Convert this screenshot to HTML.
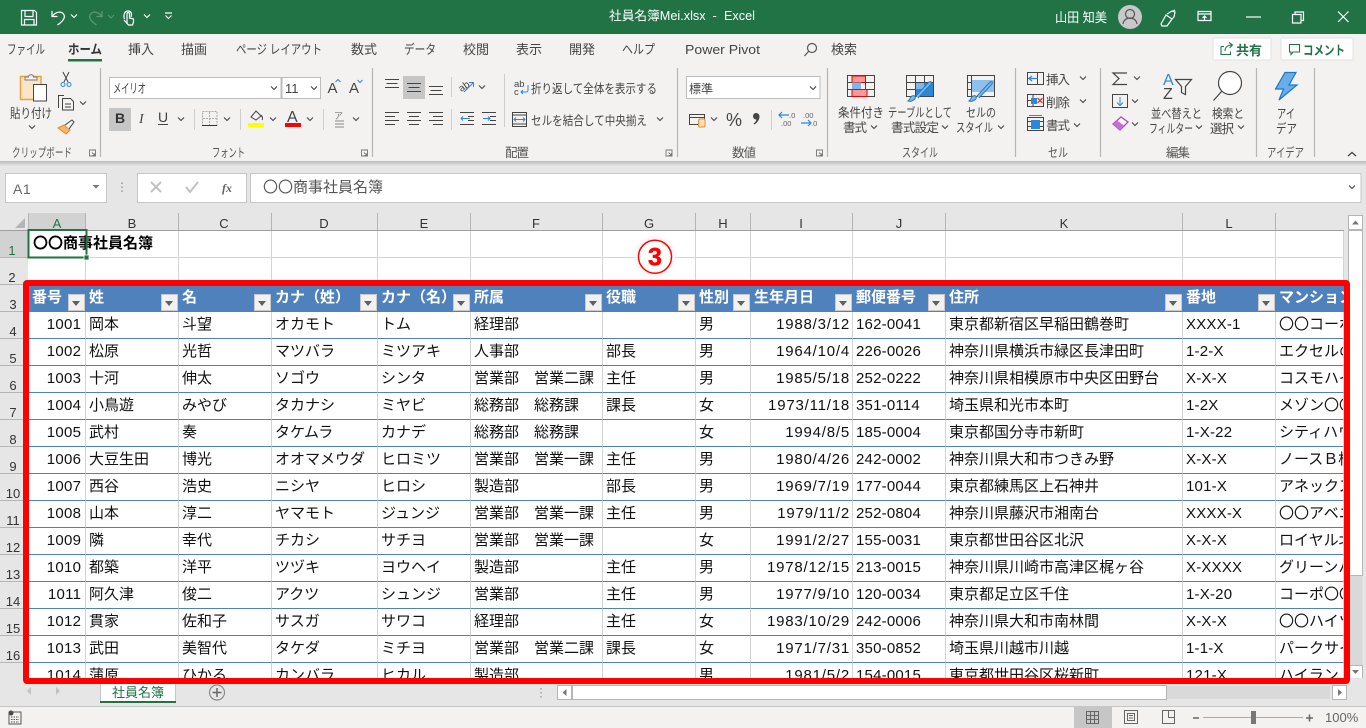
<!DOCTYPE html>
<html lang="ja"><head><meta charset="utf-8"><title>社員名簿Mei.xlsx - Excel</title>
<style>
html,body{margin:0;padding:0;width:1366px;height:728px;overflow:hidden;background:#e6e6e6}
body{position:relative;font-family:"Liberation Sans","Noto Sans CJK JP",sans-serif}
svg{position:absolute;left:0;top:0;font-family:"Liberation Sans","Noto Sans CJK JP",sans-serif}
#grid{position:absolute;left:28px;top:231px;width:1316px;height:447px;overflow:hidden;background:#fff}
table{border-collapse:separate;border-spacing:0;table-layout:fixed;width:1316px;font-size:15px;color:#111}
td{height:27px;box-sizing:border-box;border-right:1px solid #d4d4d4;border-bottom:1px solid #d4d4d4;padding:0 0 0 3px;white-space:nowrap;overflow:hidden;position:relative;line-height:26px}
tr.d td{border-bottom-color:#4f81bd}
tr.h td{background:#4f81bd;color:#fff;font-weight:bold;border-right:0;border-bottom-color:#4f81bd;line-height:20px;vertical-align:top;padding-top:3px}
td.r{text-align:right;padding:0 2px 0 0;letter-spacing:.8px}
td.n{text-align:right;padding:0 3.7px 0 0;letter-spacing:.3px}
td.z{letter-spacing:.2px}
i{position:absolute;right:1px;top:9px;width:15px;height:15px;border:1px solid #c9c9c9;background:#f1f1f1}
i:after{content:"";position:absolute;left:3px;top:6px;border:4px solid transparent;border-top:5px solid #5f5f5f;border-bottom:0}
#red{position:absolute;left:23.4px;top:280px;width:1326.6px;height:404px;box-sizing:border-box;border:6.7px solid #f00;border-radius:4px}
</style></head><body>
<svg width="1366" height="728" viewBox="0 0 1366 728">
<defs><path id="c" d="M-3-1.500 0 1.500 3-1.500" fill="none" stroke="#444" stroke-width="1.100"/>
<path id="w" d="M-3-1.500 0 1.500 3-1.500" fill="none" stroke="#fff" stroke-width="1.100"/>
<linearGradient id="sh" x1="0" y1="0" x2="0" y2="1"><stop offset="0" stop-color="#bbb"/><stop offset="1" stop-color="#e6e6e6"/></linearGradient>
<filter id="glow" x="-30%" y="-30%" width="160%" height="160%"><feGaussianBlur stdDeviation="1.500"/></filter></defs>
<!-- title -->
<rect width="1366" height="34" fill="#217346"/>
<g fill="none" stroke="#fff" stroke-width="1.200">
<path d="M21.500 10.500h13l2 2v12.500h-15zM25 10.500v6h8v-6M24.500 25v-5.500h9.500v5.500"/>
<path d="M52 11v5.500h5.500M52.500 16c3-4 8-5 10.500-2.500 3 3 1 7-5.500 11.500"/>
<path d="M124.500 19c-1-2-1-8 3.500-8 3.500 0 4 3 3 6M127 24v-10c0-2 2.500-2 2.500 0v4l4 1v3l-1 3h-4l-4.500-5" />
<path d="M165 13h7"/>
</g>
<path d="M102 11v5.500h-5.500M101.500 16c-3-4-8-5-10.500-2.500-3 3-1 7 5.500 11.500" fill="none" stroke="#5c9a77" stroke-width="1.200"/>
<use href="#w" x="74" y="16"/><use href="#w" x="147" y="16"/><use href="#w" x="168.500" y="17"/>
<path d="M108 15l3 3 3-3" fill="none" stroke="#5c9a77"/>
<text x="609" y="20" font-size="12.500" fill="#fff" textLength="146" lengthAdjust="spacingAndGlyphs" xml:space="preserve">社員名簿Mei.xlsx  -  Excel</text>
<text x="1055" y="22" font-size="13" fill="#fff" textLength="52" lengthAdjust="spacingAndGlyphs" xml:space="preserve">山田 知美</text>
<circle cx="1130" cy="17" r="12" fill="#c8c8c8"/>
<circle cx="1130" cy="14" r="4.500" fill="none" stroke="#555" stroke-width="1.200"/><path d="M1123 24c1-8 13-8 14 0" fill="none" stroke="#555" stroke-width="1.200"/>
<g fill="none" stroke="#fff" stroke-width="1.200">
<path d="M1161 24l5-9 6 4-5 7-5 0zM1167 14l5-3 3 1-1 5-2 2M1173 11l2-1"/>
<path d="M1198 11.500h13v9h-13zM1198 14h13M1204.500 20v-4M1202.500 18l2-2 2 2"/>
<path d="M1246 17h15"/>
<path d="M1292.500 14.500h8.500v8.500h-8.500zM1295 14.500v-2.500h8.500v8.500h-2.500"/>
<path d="M1338 11.500l10.500 10.500M1348.500 11.500l-10.500 10.500"/>
</g>
<!-- ribbon -->
<rect y="34" width="1366" height="127" fill="#f3f2f1"/>
<rect y="161" width="1366" height="5" fill="url(#sh)"/>
<g font-size="13" fill="#444">
<text x="7" y="54" textLength="38" lengthAdjust="spacingAndGlyphs">ファイル</text>
<text x="68" y="54" font-weight="bold" textLength="34" lengthAdjust="spacingAndGlyphs" style="fill:#333">ホーム</text>
<text x="128" y="54" textLength="26">挿入</text><text x="181" y="54" textLength="26">描画</text>
<text x="236" y="54" textLength="86" lengthAdjust="spacingAndGlyphs" xml:space="preserve">ページ レイアウト</text>
<text x="351" y="54" textLength="26">数式</text><text x="404" y="54" textLength="32" lengthAdjust="spacingAndGlyphs">データ</text>
<text x="463" y="54" textLength="26">校閲</text><text x="516" y="54" textLength="26">表示</text><text x="569" y="54" textLength="26">開発</text>
<text x="622" y="54" textLength="33" lengthAdjust="spacingAndGlyphs">ヘルプ</text>
<text x="685" y="54" textLength="75" lengthAdjust="spacingAndGlyphs">Power Pivot</text>
<text x="831" y="54" textLength="26">検索</text></g>
<rect x="68" y="59" width="34" height="2.500" fill="#217346"/>
<circle cx="812" cy="48" r="4.500" fill="none" stroke="#555" stroke-width="1.200"/><path d="M808.500 51.500l-4 4.500" stroke="#555" stroke-width="1.200"/>
<rect x="1213" y="38" width="58" height="22" rx="1" fill="#fff" stroke="#e3e2e0"/>
<rect x="1281" y="38" width="72" height="22" rx="1" fill="#fff" stroke="#e3e2e0"/>
<path d="M1221 46.500h3M1221 46.500v8h9.500v-3M1225 51c0-4 3-6 7-6M1229 42.500l3.500 2.500-3 3" fill="none" stroke="#217346" stroke-width="1.100"/>
<text x="1236" y="55" font-size="13" font-weight="bold" fill="#217346" textLength="26">共有</text>
<path d="M1289.500 44.500h10v7.500h-6.500l-2 2.500v-2.500h-1.500z" fill="none" stroke="#217346" stroke-width="1.100"/>
<text x="1303" y="55" font-size="13" font-weight="bold" fill="#217346" textLength="42" lengthAdjust="spacingAndGlyphs">コメント</text>
<!-- separators -->
<g stroke="#b8b6b4" stroke-width="1.200">
<path d="M100.500 68v89M372.500 68v89M677.500 68v89M827.500 68v89M1015.500 68v89M1100.500 68v89M1256.500 68v89M1314.500 68v89"/></g>
<g stroke="#cfcdcb"><path d="M194.500 109v21M240.500 109v21M323.500 109v21M451.500 77v20M451.500 109v21M504.500 74v53M771.500 110v20"/></g>
<!-- group labels -->
<g font-size="12.500" fill="#555">
<text x="12" y="157" textLength="60" lengthAdjust="spacingAndGlyphs">クリップボード</text>
<text x="212" y="157" textLength="33" lengthAdjust="spacingAndGlyphs">フォント</text>
<text x="505" y="157" textLength="24">配置</text><text x="732" y="157" textLength="24">数値</text>
<text x="902" y="157" textLength="36" lengthAdjust="spacingAndGlyphs">スタイル</text>
<text x="1048" y="157" textLength="20" lengthAdjust="spacingAndGlyphs">セル</text>
<text x="1166" y="157" textLength="24">編集</text>
<text x="1267" y="157" textLength="37" lengthAdjust="spacingAndGlyphs">アイデア</text></g>
<g fill="none" stroke="#777" stroke-width=".900"><path d="M89.500 150h6v6h-6zM92 152.500l3 3M95 153v2.500h-2.500M361.500 150h6v6h-6zM364 152.500l3 3M367 153v2.500h-2.500M666 150h6v6h-6zM668.500 152.500l3 3M671.500 153v2.500h-2.500M816.500 150h6v6h-6zM819 152.500l3 3M822 153v2.500h-2.500"/></g>
<!-- clipboard -->
<rect x="20.500" y="76.500" width="20.500" height="23" fill="#fbe5c8" stroke="#eda33c" stroke-width="1.500"/>
<path d="M25 80v-3h3.500c0-3 5-3 5 0H37v3z" fill="#f3f2f1" stroke="#777"/>
<rect x="33.500" y="84.500" width="13" height="16.500" fill="#fff" stroke="#444"/>
<text x="10" y="118" font-size="13" fill="#444" textLength="42" lengthAdjust="spacingAndGlyphs">貼り付け</text>
<use href="#c" x="32" y="127"/>
<path d="M63 72l5 10M69 72l-5 10" stroke="#444" fill="none"/><circle cx="63" cy="84.500" r="2" fill="none" stroke="#2b88d8"/><circle cx="69" cy="84.500" r="2" fill="none" stroke="#2b88d8"/>
<path d="M58.500 108V95.500h5.500M62.500 98.500h8l3 3v8.500h-11zM65 104h6M65 107h6" fill="none" stroke="#444"/><use href="#c" x="83" y="103"/>
<path d="M58 128l6-3 6 5-4 4z" fill="#f5b66e" stroke="#e8881f"/><path d="M65 125l7-5 2 2-5 7" fill="#f3f2f1" stroke="#444"/>
<!-- font -->
<rect x="109.500" y="77.500" width="171.500" height="21" fill="#fff" stroke="#bdbdbd"/><rect x="282" y="77.500" width="38.500" height="21" fill="#fff" stroke="#bdbdbd"/>
<text x="113" y="93" font-size="13" fill="#444" textLength="33" lengthAdjust="spacingAndGlyphs">メイリオ</text>
<text x="285" y="93" font-size="13" fill="#444">11</text><use href="#c" x="274" y="88"/><use href="#c" x="314" y="88"/>
<text x="327.500" y="93" font-size="15" fill="#444">A</text><path d="M335.500 82l2.500-2.500 2.500 2.500" fill="none" stroke="#2b88d8"/>
<text x="349" y="93" font-size="15" fill="#444">A</text><path d="M357.500 80l2.500 2.500 2.500-2.500" fill="none" stroke="#2b88d8"/>
<rect x="109" y="108" width="22" height="23" fill="#c6c6c6"/>
<text x="115" y="123" font-size="14" font-weight="bold" fill="#333">B</text>
<text x="139" y="123" font-size="14" font-style="italic" fill="#444" font-family="Liberation Serif">I</text>
<text x="158" y="122" font-size="14" fill="#444">U</text><path d="M158 124.500h10" stroke="#444"/><use href="#c" x="181" y="119"/>
<rect x="202.500" y="111.500" width="14.500" height="14" fill="none" stroke="#aaa" stroke-dasharray="2 1"/><path d="M209.500 112v13M203 118.500h14" stroke="#aaa" stroke-dasharray="2 1"/><path d="M202 125.500h15" stroke="#333"/><use href="#c" x="227" y="119"/>
<path d="M251 117l5-6 5 5-5 4zM261 115c1 1 2 3 1 5" fill="none" stroke="#444"/><rect x="248" y="123" width="16" height="4" fill="#ff0"/><use href="#c" x="273" y="119"/>
<text x="287" y="122" font-size="16" fill="#444">A</text><rect x="285" y="123" width="16" height="4" fill="#f00"/><use href="#c" x="310" y="119"/>
<text x="334" y="119" font-size="9" fill="#777">ア</text><path d="M335 121h9M335 124h9M335 127h9" stroke="#888"/><use href="#c" x="356" y="119"/>
<!-- alignment -->
<rect x="403" y="76" width="22" height="23" fill="#c6c6c6"/>
<g stroke="#444" fill="none"><path d="M385 79.500h14M386.500 83.500h11M385 87.500h14M407 83.500h14M408.500 87.500h11M407 91.500h14M429 86.500h14M430.500 90.500h11M429 94.500h14M385 112.500h14M385 116.500h10M385 120.500h14M385 124.500h10M407 112.500h14M409 116.500h10M407 120.500h14M409 124.500h10M429 112.500h14M433 116.500h10M429 120.500h14M433 124.500h10"/>
<path d="M460 112.500h14M468 116.500h6M468 120.500h6M460 124.500h14M482 112.500h14M490 116.500h6M490 120.500h6M482 124.500h14"/></g>
<path d="M470 118.500h-9M463 116.500l-2 2 2 2M483 118.500h7M488 116.500l2 2-2 2" fill="none" stroke="#2b88d8"/>
<text x="459" y="91" font-size="10" fill="#444" transform="rotate(-35 462 88)">ab</text><path d="M464 92l9-9M469 82.500h4.500v4.500" fill="none" stroke="#2b88d8"/><use href="#c" x="482" y="87"/>
<text x="514" y="87" font-size="9.500" fill="#444">ab</text><text x="514" y="95" font-size="9.500" fill="#444">c</text><path d="M528 85v5c0 2-1 2-2 2h-5M523 90l-2 2 2 2" fill="none" stroke="#2b88d8"/>
<text x="531" y="93" font-size="12.500" fill="#444" textLength="126" lengthAdjust="spacingAndGlyphs">折り返して全体を表示する</text>
<rect x="512.500" y="112.500" width="14" height="14" fill="none" stroke="#444"/><path d="M513 115h13M513 124h13" stroke="#444"/><path d="M514 119.500h11M516 117.500l-2 2 2 2M523 117.500l2 2-2 2" fill="none" stroke="#2b88d8"/>
<text x="531" y="125" font-size="12.500" fill="#444" textLength="116" lengthAdjust="spacingAndGlyphs">セルを結合して中央揃え</text><use href="#c" x="660" y="119"/>
<!-- number -->
<rect x="686.500" y="76.500" width="133.500" height="22" fill="#fff" stroke="#bdbdbd"/>
<text x="689" y="93" font-size="12" fill="#444" textLength="24">標準</text><use href="#c" x="813" y="88"/>
<path d="M689.500 114.500h15v10h-15zM689.500 117.500h15" fill="none" stroke="#444"/><rect x="698.500" y="119" width="6.500" height="8" rx="1.500" fill="#fbe0c0" stroke="#eb8a2c"/><use href="#c" x="714" y="119"/>
<text x="726" y="126" font-size="18" fill="#444">%</text>
<path d="M756 113c2 0 3.500 1.500 3.500 3.500 0 3-2 6-5 8l-1-1c1.500-1 2.500-2 3-4-2 0-3.500-1.500-3.500-3.300 0-1.800 1.500-3.200 3-3.200z" fill="#444"/>
<path d="M779 115h10M782 112l-3 3 3 3M801 123h10M808 120l3 3-3 3" fill="none" stroke="#2b88d8" stroke-width="1.200"/>
<g font-size="7.500" fill="#666"><text x="789" y="118">.0</text><text x="781" y="126">.00</text><text x="803" y="118">.00</text><text x="811" y="126">.0</text></g>
<!-- styles -->
<g fill="none" stroke="#444"><path d="M847.500 75.500h27v21h-27zM847.500 82.500h27M847.500 89.500h27M856.500 75.500v21M865.500 75.500v21"/></g>
<rect x="852" y="76" width="13.500" height="6.500" fill="#f99" stroke="#e00"/><rect x="852" y="82.500" width="9" height="7" fill="#7db8ea"/><rect x="852" y="89.500" width="15" height="7" fill="#f99" stroke="#e00"/>
<g fill="none" stroke="#444"><path d="M906.500 75.500h27v21h-27zM906.500 82.500h27M906.500 89.500h27M915.500 75.500v21M924.500 75.500v21"/></g>
<rect x="916" y="83" width="17" height="13" fill="#2b88d8"/><rect x="916" y="83" width="8" height="6" fill="#7db8ea"/>
<path d="M915 99c-3 2-4 3-7 2 2-1 2-4 4-5 2-1 4 0 3 3zM916 96l13-14c2-1 3 0 2 2l-13 14" fill="#7db8ea" stroke="#2b79c2"/>
<g fill="none" stroke="#444"><path d="M967.500 75.500h27v21h-27zM967.500 82.500h4M990.500 82.500h4M967.500 89.500h4M971.500 75.500v21"/></g>
<rect x="972" y="80" width="22" height="12" fill="#8dc0ee"/>
<path d="M976 99c-3 2-4 3-7 2 2-1 2-4 4-5 2-1 4 0 3 3zM977 96l13-14c2-1 3 0 2 2l-13 14" fill="#7db8ea" stroke="#2b79c2"/>
<g font-size="12.500" fill="#444">
<text x="838" y="117" textLength="46" lengthAdjust="spacingAndGlyphs">条件付き</text><text x="843" y="132" textLength="24">書式</text><use href="#c" x="874" y="127"/>
<text x="888" y="117" textLength="64" lengthAdjust="spacingAndGlyphs">テーブルとして</text><text x="891" y="132" textLength="48">書式設定</text><use href="#c" x="945" y="127"/>
<text x="966" y="117" textLength="30" lengthAdjust="spacingAndGlyphs">セルの</text><text x="956" y="132" textLength="37" lengthAdjust="spacingAndGlyphs">スタイル</text><use href="#c" x="1001" y="127"/>
<!-- cells -->
<text x="1046" y="84" textLength="24">挿入</text><use href="#c" x="1083" y="78"/>
<text x="1046" y="107" textLength="24">削除</text><use href="#c" x="1083" y="101"/>
<text x="1046" y="130" textLength="24">書式</text><use href="#c" x="1077" y="125"/>
<!-- editing -->
<text x="1151" y="118" textLength="51" lengthAdjust="spacingAndGlyphs">並べ替えと</text><text x="1149" y="133" textLength="44" lengthAdjust="spacingAndGlyphs">フィルター</text><use href="#c" x="1199" y="127"/>
<text x="1212" y="118" textLength="32" lengthAdjust="spacingAndGlyphs">検索と</text><text x="1210" y="133" textLength="24">選択</text><use href="#c" x="1241" y="127"/>
<text x="1277" y="118" textLength="18" lengthAdjust="spacingAndGlyphs">アイ</text><text x="1276" y="133" textLength="21" lengthAdjust="spacingAndGlyphs">デア</text></g>
<!-- cell icons -->
<g fill="none" stroke="#444"><path d="M1027.500 72.500h16v12h-16zM1037.500 72.500v12M1027.500 78.500h10M1027.500 94.500h16v12h-16zM1033 94.500v12M1027.500 100.500h5M1027.500 117.500h16v13h-16zM1027.500 121.500h16M1027.500 126.500h16"/></g>
<path d="M1038 78.500h-9M1032 76l-3 2.500 3 2.500" fill="none" stroke="#2b88d8" stroke-width="1.300"/><rect x="1031" y="98" width="6" height="6" fill="#2b88d8"/><path d="M1037.500 98l5 5M1042.500 98l-5 5" stroke="#e33" stroke-width="1.300"/>
<rect x="1031" y="120" width="9" height="9" fill="#2b88d8"/><path d="M1029 115.500h13" stroke="#2b88d8"/>
<path d="M1127 73h-14l6 5.500-6 6h14" fill="none" stroke="#444" stroke-width="1.200"/><use href="#c" x="1137" y="78"/>
<path d="M1112.500 94.500h15v13h-15z" fill="none" stroke="#444"/><path d="M1120 97v8M1117 102.500l3 3 3-3" fill="none" stroke="#2b88d8"/><use href="#c" x="1135" y="101"/>
<path d="M1113 124l8-7 7 5-8 8z" fill="#fff" stroke="#b146c2" stroke-width="1.300"/><path d="M1113 124l4-3.500 7 5-4 4.500z" fill="#c86dd7"/><use href="#c" x="1135" y="124"/>
<text x="1163" y="85" font-size="16" fill="#2b88d8">A</text><text x="1163" y="99" font-size="16" fill="#444">Z</text>
<path d="M1175.500 79.500h16l-6 7v8l-4-2v-6z" fill="none" stroke="#444" stroke-width="1.200"/>
<circle cx="1230" cy="83" r="11.500" fill="#fff" stroke="#444" stroke-width="1.200"/><path d="M1222 91l-8.500 9.500" stroke="#444" stroke-width="1.200"/>
<path d="M1285 72.500h11l-7 12.500h8l-18 15 4.500-11h-8z" fill="#69aeea" stroke="#1e78c6" stroke-width="1.200"/>
<path d="M1348 156l4-3.500 4 3.500" fill="none" stroke="#444" stroke-width="1.300"/>
<!-- formula -->
<rect x="5.500" y="173.500" width="101" height="29" fill="#fff" stroke="#c6c6c6"/>
<text x="13" y="194" font-size="14" fill="#666" letter-spacing=".5">A1</text><path d="M92.500 185h7l-3.500 3.500z" fill="#777"/>
<path d="M122 182.500v1.500M122 186.500v1.500M122 190.500v1.500" stroke="#999" stroke-width="1.500"/>
<rect x="137.500" y="173.500" width="109" height="29" fill="#fff" stroke="#c6c6c6"/>
<rect x="250.500" y="173.500" width="1110.500" height="29" fill="#fff" stroke="#c6c6c6"/>
<path d="M151 182l10 10M161 182l-10 10" stroke="#c2c2c2" stroke-width="2"/><path d="M186 187l4 5 8-10" fill="none" stroke="#c2c2c2" stroke-width="2"/>
<text x="222" y="192" font-size="12" font-style="italic" font-weight="bold" fill="#666" font-family="Liberation Serif">fx</text>
<text x="263" y="192" font-size="15" fill="#555" textLength="120">〇〇商事社員名簿</text>
<use href="#c" x="1352" y="187"/>
<!-- col headers -->
<rect x="28" y="213" width="58" height="17" fill="#d2d2d2"/>
<path d="M25 218v10h-10z" fill="#b5b5b5"/>
<path d="M0 230.500h1344" stroke="#9f9f9f"/>
<path d="M28.500 213v17M85.500 213v17M178.500 213v17M271.500 213v17M377.500 213v17M470.500 213v17M602.500 213v17M695.500 213v17M750.500 213v17M852.500 213v17M945.500 213v17M1182.500 213v17M1275.500 213v17M1344.500 213v17" stroke="#b5b5b5"/>
<g font-size="13" fill="#333" text-anchor="middle">
<text x="57" y="228" fill="#217346">A</text><text x="132" y="228">B</text><text x="224" y="228">C</text><text x="324" y="228">D</text><text x="424" y="228">E</text><text x="536" y="228">F</text><text x="649" y="228">G</text><text x="723" y="228">H</text><text x="801" y="228">I</text><text x="899" y="228">J</text><text x="1064" y="228">K</text><text x="1229" y="228">L</text>
</g>
<!-- row headers -->
<rect x="0" y="231" width="28" height="27" fill="#d2d2d2"/>
<path d="M0 257.500h28M0 284.500h28M0 311.500h28M0 338.500h28M0 365.500h28M0 392.500h28M0 419.500h28M0 446.500h28M0 473.500h28M0 500.500h28M0 527.500h28M0 554.500h28M0 581.500h28M0 608.500h28M0 635.500h28M0 662.500h28M28.500 231v447" stroke="#b5b5b5"/>
<g font-size="13" fill="#333" text-anchor="middle">
<text x="12" y="255" fill="#217346">1</text><text x="12" y="282">2</text><text x="13" y="309">3</text><text x="13" y="336">4</text><text x="13" y="363">5</text><text x="13" y="390">6</text><text x="13" y="417">7</text><text x="13" y="444">8</text><text x="13" y="471">9</text><text x="13" y="498">10</text><text x="13" y="525">11</text><text x="13" y="552">12</text><text x="13" y="579">13</text><text x="13" y="606">14</text><text x="13" y="633">15</text><text x="13" y="660">16</text><text x="13" y="687">17</text>
</g>
<!-- v scrollbar -->
<rect x="1344" y="213" width="22" height="465" fill="#e6e6e6"/>
<rect x="1348.500" y="215.500" width="14" height="14" fill="#fff" stroke="#b5b5b5"/><path d="M1352 224.500l3.500-4 3.500 4z" fill="#777"/>
<rect x="1348.500" y="230.500" width="14" height="345" fill="#fff" stroke="#b5b5b5"/>
<rect x="1349" y="576" width="13.500" height="89" fill="#d9d9d9"/>
<rect x="1348.500" y="665.500" width="14" height="13" fill="#fff" stroke="#b5b5b5"/><path d="M1352 670h7l-3.500 4z" fill="#777"/>
<!-- sheet tabs -->
<rect y="678" width="1366" height="28" fill="#e6e6e6"/>
<path d="M31 687v8l-4-4zM56 687v8l4-4z" fill="#c2c2c2"/>
<rect x="100" y="684" width="76" height="18" fill="#fff"/><rect x="100" y="701" width="76" height="2" fill="#217346"/>
<path d="M100.500 684v17M175.500 684v17" stroke="#c6c6c6"/>
<text x="112" y="697" font-size="13" fill="#217346" textLength="52">社員名簿</text>
<circle cx="217" cy="692.500" r="7.500" fill="none" stroke="#8a8a8a" stroke-width="1.200"/><path d="M217 688v9M212.500 692.500h9" stroke="#666" stroke-width="1.500"/>
<path d="M541 688v1.500M541 692v1.500M541 696v1.500" stroke="#999" stroke-width="1.300"/>
<rect x="557.500" y="685.500" width="14" height="14" fill="#fff" stroke="#b5b5b5"/><path d="M566.500 689v7l-4-3.500z" fill="#777"/>
<rect x="572" y="686" width="758" height="13" fill="#d9d9d9"/>
<rect x="572.500" y="685.500" width="594" height="14" fill="#fff" stroke="#b5b5b5"/>
<rect x="1332.500" y="685.500" width="14" height="14" fill="#fff" stroke="#b5b5b5"/><path d="M1338 689v7l4-3.500z" fill="#777"/>
<!-- status -->
<rect y="706" width="1366" height="22" fill="#f3f2f1"/><path d="M0 706.500h1366" stroke="#c6c6c6"/>
<circle cx="11" cy="713" r="2.500" fill="#444"/><path d="M9 712h12v12h-12z" fill="none" stroke="#555"/><path d="M11 717h8M11 719.500h8M11 722h8" stroke="#555" stroke-dasharray="1.500 1"/>
<rect x="1074" y="707" width="38" height="21" fill="#c6c6c6"/>
<g fill="none" stroke="#666"><path d="M1086.500 711.500h12v12h-12zM1086.500 715.500h12M1086.500 719.500h12M1090.500 711.500v12M1094.500 711.500v12"/>
<path d="M1124.500 710.500h13v13h-13zM1127.500 713.500h7v7h-7zM1129 715.500h4M1129 718h4"/>
<path d="M1162.500 710.500h12v13h-12zM1168.500 710.500v7h6"/></g>
<path d="M1193 718h6M1306 718h7M1309.500 714.500v7" stroke="#666" stroke-width="1.500"/><path d="M1203 717.500h100" stroke="#aaa"/><rect x="1251" y="711" width="5" height="13" fill="#777"/>
<text x="1325" y="722" font-size="13" fill="#666">100%</text>
</svg>
<div id="grid"><table>
<colgroup><col style="width:58px"><col style="width:93px"><col style="width:93px"><col style="width:106px"><col style="width:93px"><col style="width:132px"><col style="width:93px"><col style="width:55px"><col style="width:102px"><col style="width:93px"><col style="width:237px"><col style="width:93px"><col style="width:68px"></colgroup>
<tr><td colspan="2" style="border-right:1px solid #d4d4d4;font-weight:bold;color:#000;padding-left:5px">〇〇商事社員名簿</td><td></td><td></td><td></td><td></td><td></td><td></td><td></td><td></td><td></td><td></td><td></td></tr>
<tr><td></td><td></td><td></td><td></td><td></td><td></td><td></td><td></td><td></td><td></td><td></td><td></td><td></td></tr>
<tr class="h"><td style="padding-left:4px">番号<i></i></td><td>姓<i></i></td><td>名<i></i></td><td>カナ（姓）<i></i></td><td>カナ（名）<i></i></td><td>所属<i></i></td><td>役職<i></i></td><td>性別<i></i></td><td>生年月日<i></i></td><td>郵便番号<i></i></td><td>住所<i></i></td><td>番地<i></i></td><td>マンション名</td></tr>
<tr class="d"><td class="n">1001</td><td>岡本</td><td>斗望</td><td>オカモト</td><td>トム</td><td>経理部</td><td></td><td>男</td><td class="r">1988/3/12</td><td class="z">162-0041</td><td>東京都新宿区早稲田鶴巻町</td><td class="z">XXXX-1</td><td>〇〇コーポ</td></tr>
<tr class="d"><td class="n">1002</td><td>松原</td><td>光哲</td><td>マツバラ</td><td>ミツアキ</td><td>人事部</td><td>部長</td><td>男</td><td class="r">1964/10/4</td><td class="z">226-0026</td><td>神奈川県横浜市緑区長津田町</td><td class="z">1-2-X</td><td>エクセルの森</td></tr>
<tr class="d"><td class="n">1003</td><td>十河</td><td>伸太</td><td>ソゴウ</td><td>シンタ</td><td>営業部　営業二課</td><td>主任</td><td>男</td><td class="r">1985/5/18</td><td class="z">252-0222</td><td>神奈川県相模原市中央区田野台</td><td class="z">X-X-X</td><td>コスモハイツ</td></tr>
<tr class="d"><td class="n">1004</td><td>小鳥遊</td><td>みやび</td><td>タカナシ</td><td>ミヤビ</td><td>総務部　総務課</td><td>課長</td><td>女</td><td class="r">1973/11/18</td><td class="z">351-0114</td><td>埼玉県和光市本町</td><td class="z">1-2X</td><td>メゾン〇〇</td></tr>
<tr class="d"><td class="n">1005</td><td>武村</td><td>奏</td><td>タケムラ</td><td>カナデ</td><td>総務部　総務課</td><td></td><td>女</td><td class="r">1994/8/5</td><td class="z">185-0004</td><td>東京都国分寺市新町</td><td class="z">1-X-22</td><td>シティハウス</td></tr>
<tr class="d"><td class="n">1006</td><td>大豆生田</td><td>博光</td><td>オオマメウダ</td><td>ヒロミツ</td><td>営業部　営業一課</td><td>主任</td><td>男</td><td class="r">1980/4/26</td><td class="z">242-0002</td><td>神奈川県大和市つきみ野</td><td class="z">X-X-X</td><td>ノースＢ棟</td></tr>
<tr class="d"><td class="n">1007</td><td>西谷</td><td>浩史</td><td>ニシヤ</td><td>ヒロシ</td><td>製造部</td><td>部長</td><td>男</td><td class="r">1969/7/19</td><td class="z">177-0044</td><td>東京都練馬区上石神井</td><td class="z">101-X</td><td>アネックス</td></tr>
<tr class="d"><td class="n">1008</td><td>山本</td><td>淳二</td><td>ヤマモト</td><td>ジュンジ</td><td>営業部　営業一課</td><td>主任</td><td>男</td><td class="r">1979/11/2</td><td class="z">252-0804</td><td>神奈川県藤沢市湘南台</td><td class="z">XXXX-X</td><td>〇〇アベニュー</td></tr>
<tr class="d"><td class="n">1009</td><td>隣</td><td>幸代</td><td>チカシ</td><td>サチヨ</td><td>営業部　営業一課</td><td></td><td>女</td><td class="r">1991/2/27</td><td class="z">155-0031</td><td>東京都世田谷区北沢</td><td class="z">X-X-X</td><td>ロイヤル北沢</td></tr>
<tr class="d"><td class="n">1010</td><td>都築</td><td>洋平</td><td>ツヅキ</td><td>ヨウヘイ</td><td>製造部</td><td>主任</td><td>男</td><td class="r">1978/12/15</td><td class="z">213-0015</td><td>神奈川県川崎市高津区梶ヶ谷</td><td class="z">X-XXXX</td><td>グリーンハイツ</td></tr>
<tr class="d"><td class="n">1011</td><td>阿久津</td><td>俊二</td><td>アクツ</td><td>シュンジ</td><td>営業部</td><td>主任</td><td>男</td><td class="r">1977/9/10</td><td class="z">120-0034</td><td>東京都足立区千住</td><td class="z">1-X-20</td><td>コーポ〇〇</td></tr>
<tr class="d"><td class="n">1012</td><td>貫家</td><td>佐和子</td><td>サスガ</td><td>サワコ</td><td>経理部</td><td>主任</td><td>女</td><td class="r">1983/10/29</td><td class="z">242-0006</td><td>神奈川県大和市南林間</td><td class="z">X-X-X</td><td>〇〇ハイツ</td></tr>
<tr class="d"><td class="n">1013</td><td>武田</td><td>美智代</td><td>タケダ</td><td>ミチヨ</td><td>営業部　営業二課</td><td>課長</td><td>女</td><td class="r">1971/7/31</td><td class="z">350-0852</td><td>埼玉県川越市川越</td><td class="z">1-1-X</td><td>パークサイド</td></tr>
<tr class="d"><td class="n">1014</td><td>蒲原</td><td>ひかる</td><td>カンバラ</td><td>ヒカル</td><td>製造部</td><td></td><td>男</td><td class="r">1981/5/2</td><td class="z">154-0015</td><td>東京都世田谷区桜新町</td><td class="z">121-X</td><td>ハイランド</td></tr>
</table></div>
<svg width="1366" height="728" viewBox="0 0 1366 728" style="pointer-events:none">
<rect x="28.500" y="230" width="58" height="27.500" fill="none" stroke="#217346" stroke-width="2"/>
<rect x="84" y="255" width="5" height="5" fill="#217346" stroke="#fff" stroke-width=".8"/>
<circle cx="655" cy="257" r="20.500" fill="#f4f4f4" filter="url(#glow)"/>
<circle cx="655" cy="256.700" r="16.500" fill="#fff" stroke="#f00" stroke-width="1.500"/>
<text x="655" y="265.700" font-size="25" font-weight="bold" fill="#f00" stroke="#f00" stroke-width=".5" text-anchor="middle" font-family="Liberation Sans">3</text>
</svg>
<div id="red"></div>
</body></html>
